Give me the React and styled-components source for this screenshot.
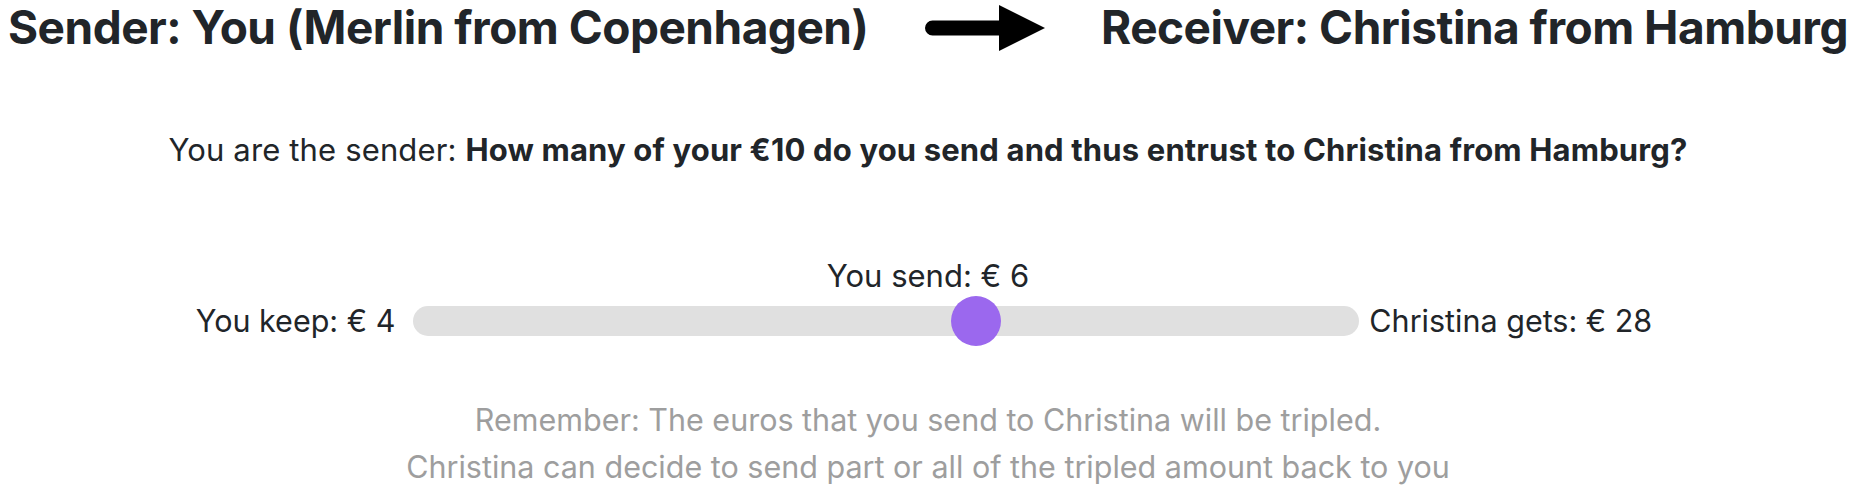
import React, { useState } from "react";
import styled, { createGlobalStyle } from "styled-components";

const GlobalStyle = createGlobalStyle`
  body {
    margin: 0;
    background: #fff;
    font-family: Inter, "Noto Sans", sans-serif;
    color: #212529;
  }
`;

const Page = styled.div`
  padding: 0 8px;
`;

const Header = styled.div`
  display: flex;
  justify-content: space-between;
  align-items: center;
`;

const Title = styled.h1`
  margin: 0;
  font-size: 46px;
  line-height: 55px;
  font-weight: 700;
  letter-spacing: -0.5px;
`;

const Question = styled.p`
  margin: 75px 0 0;
  text-align: center;
  font-size: 31px;
  line-height: 40px;
  letter-spacing: 0.15px;
`;

const SendLabel = styled.div`
  margin-top: 86px;
  text-align: center;
  font-size: 31px;
  line-height: 40px;
`;

const SliderRow = styled.div`
  display: flex;
  justify-content: center;
  align-items: center;
  height: 50px;
  padding-right: 8px;
`;

const SideLabel = styled.span`
  font-size: 30.5px;
  line-height: 40px;
  margin: ${(p) => (p.$side === "left" ? "0 18px 0 0" : "0 0 0 10px")};
`;

const Track = styled.div`
  position: relative;
  width: 946px;
  height: 30px;
  border-radius: 15px;
  background: #e0e0e0;
`;

const Thumb = styled.div`
  position: absolute;
  top: 50%;
  width: 50px;
  height: 50px;
  margin-top: -25px;
  border-radius: 50%;
  background: #9b68ee;
`;

const Note = styled.div`
  margin-top: 50px;
  text-align: center;
  font-size: 30.5px;
  line-height: 47px;
  color: #9e9e9e;
`;

const Arrow = () => (
  <svg width="120" height="46" viewBox="0 0 120 46">
    <path d="M7.5 15.5 H76 V30.5 H7.5 A7.5 7.5 0 0 1 7.5 15.5 Z" fill="#000" />
    <polygon points="74,0 120,23 74,46" fill="#000" />
  </svg>
);

export default function App() {
  const [sent] = useState(6);
  const total = 10;
  const trackW = 946;
  const thumb = 50;
  const left = ((trackW - thumb) * sent) / total;

  return (
    <Page>
      <GlobalStyle />
      <Header>
        <Title>Sender: You (Merlin from Copenhagen)</Title>
        <Arrow />
        <Title>Receiver: Christina from Hamburg</Title>
      </Header>
      <Question>
        You are the sender: <b>How many of your €10 do you send and thus entrust to Christina from Hamburg?</b>
      </Question>
      <SendLabel>You send: € {sent}</SendLabel>
      <SliderRow>
        <SideLabel $side="left">You keep: € {total - sent}</SideLabel>
        <Track>
          <Thumb style={{ left }} />
        </Track>
        <SideLabel $side="right">Christina gets: € {sent * 3 + 10}</SideLabel>
      </SliderRow>
      <Note>
        Remember: The euros that you send to Christina will be tripled.
        <br />
        Christina can decide to send part or all of the tripled amount back to you
      </Note>
    </Page>
  );
}
